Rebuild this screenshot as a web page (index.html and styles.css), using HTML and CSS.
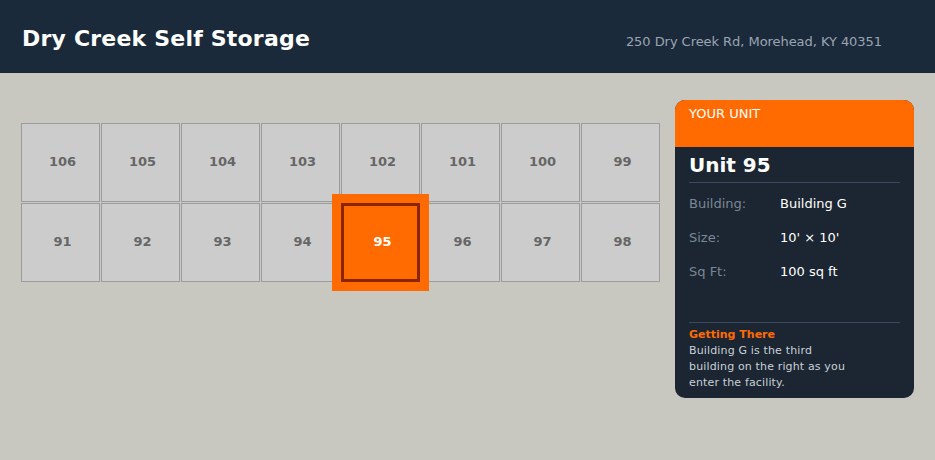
FILE: index.html
```html
<!DOCTYPE html>
<html>
<head>
<meta charset="utf-8">
<link rel="stylesheet" href="styles.css">
</head>
<body>
<header class="topbar">
  <h1 class="title">Dry Creek Self Storage</h1>
  <div class="address">250 Dry Creek Rd, Morehead, KY 40351</div>
</header>
<main class="main">
  <div class="units">
    <div class="unit">106</div>
    <div class="unit">105</div>
    <div class="unit">104</div>
    <div class="unit">103</div>
    <div class="unit">102</div>
    <div class="unit">101</div>
    <div class="unit">100</div>
    <div class="unit">99</div>
    <div class="unit">91</div>
    <div class="unit">92</div>
    <div class="unit">93</div>
    <div class="unit">94</div>
    <div class="unit unit-selected">95</div>
    <div class="unit">96</div>
    <div class="unit">97</div>
    <div class="unit">98</div>
  </div>
  <aside class="panel">
    <div class="panel-head">YOUR UNIT</div>
    <div class="panel-body">
      <h2 class="unit-name">Unit 95</h2>
      <div class="info-list">
        <div class="info-row"><span class="info-label">Building:</span><span class="info-value">Building G</span></div>
        <div class="info-row"><span class="info-label">Size:</span><span class="info-value">10' × 10'</span></div>
        <div class="info-row"><span class="info-label">Sq Ft:</span><span class="info-value">100 sq ft</span></div>
      </div>
      <div class="directions">
        <div class="dir-title">Getting There</div>
        <p class="dir-text">Building G is the third building on the right as you enter the facility.</p>
      </div>
    </div>
  </aside>
</main>
</body>
</html>
```
FILE: styles.css
```css
* { box-sizing: border-box; }
html, body { margin: 0; padding: 0; }
body {
  background: #c8c8c0;
  font-family: "DejaVu Sans", sans-serif;
  width: 935px;
  height: 460px;
  overflow: hidden;
}
.topbar {
  height: 73px;
  background: #1b2a3b;
  display: flex;
  align-items: baseline;
  justify-content: space-between;
  padding: 26px 53px 0 22px;
}
.title {
  margin: 0;
  font-size: 22px;
  font-weight: bold;
  color: #ffffff;
  line-height: 26px;
  letter-spacing: 0.2px;
}
.address {
  font-size: 13px;
  color: #9aa5b1;
  letter-spacing: -0.05px;
}
.main {
  display: flex;
  justify-content: space-between;
  align-items: flex-start;
  padding: 27px 21px 0 21px;
}
.units {
  margin-top: 23px;
  display: grid;
  grid-template-columns: repeat(8, 79px);
  grid-auto-rows: 79px;
  gap: 1px;
}
.unit {
  background: #cccccc;
  border: 1px solid #9c9c9c;
  display: flex;
  align-items: center;
  justify-content: center;
  padding-left: 4px;
  padding-bottom: 2px;
  font-size: 13px;
  font-weight: bold;
  color: #666666;
}
.unit-selected {
  position: relative;
  z-index: 1;
  background: #ff6b00;
  border: 3px solid #8b2500;
  box-shadow: 0 0 0 1px #ff6b00 inset, 0 0 0 9px #ff6b00;
  color: #ffffff;
}
.panel {
  width: 239px;
  height: 298px;
  border-radius: 10px;
  overflow: hidden;
  background: #1c2632;
  display: flex;
  flex-direction: column;
}
.panel-head {
  height: 47px;
  background: #ff6b00;
  color: #ffffff;
  font-size: 13px;
  padding: 6px 14px 0 14px;
}
.panel-body {
  padding: 0 14px;
  flex: 1;
}
.unit-name {
  margin: 0;
  padding: 7px 0 6px 0;
  font-size: 20px;
  font-weight: bold;
  color: #ffffff;
  line-height: 22px;
  border-bottom: 1px solid #3a4a5c;
}
.info-list {
  padding-top: 4px;
}
.info-row {
  display: flex;
  font-size: 13px;
  line-height: 16px;
  padding: 9px 0;
}
.info-label {
  width: 91px;
  color: #7a8796;
}
.info-value {
  color: #ffffff;
}
.directions {
  margin-top: 33px;
  border-top: 1px solid #3a4a5c;
  padding-top: 4px;
}
.dir-title {
  font-size: 11px;
  font-weight: bold;
  color: #ff6b00;
  line-height: 16px;
}
.dir-text {
  margin: 0;
  max-width: 165px;
  font-size: 11px;
  line-height: 16px;
  color: #c8d0d8;
  letter-spacing: 0.15px;
}
```
